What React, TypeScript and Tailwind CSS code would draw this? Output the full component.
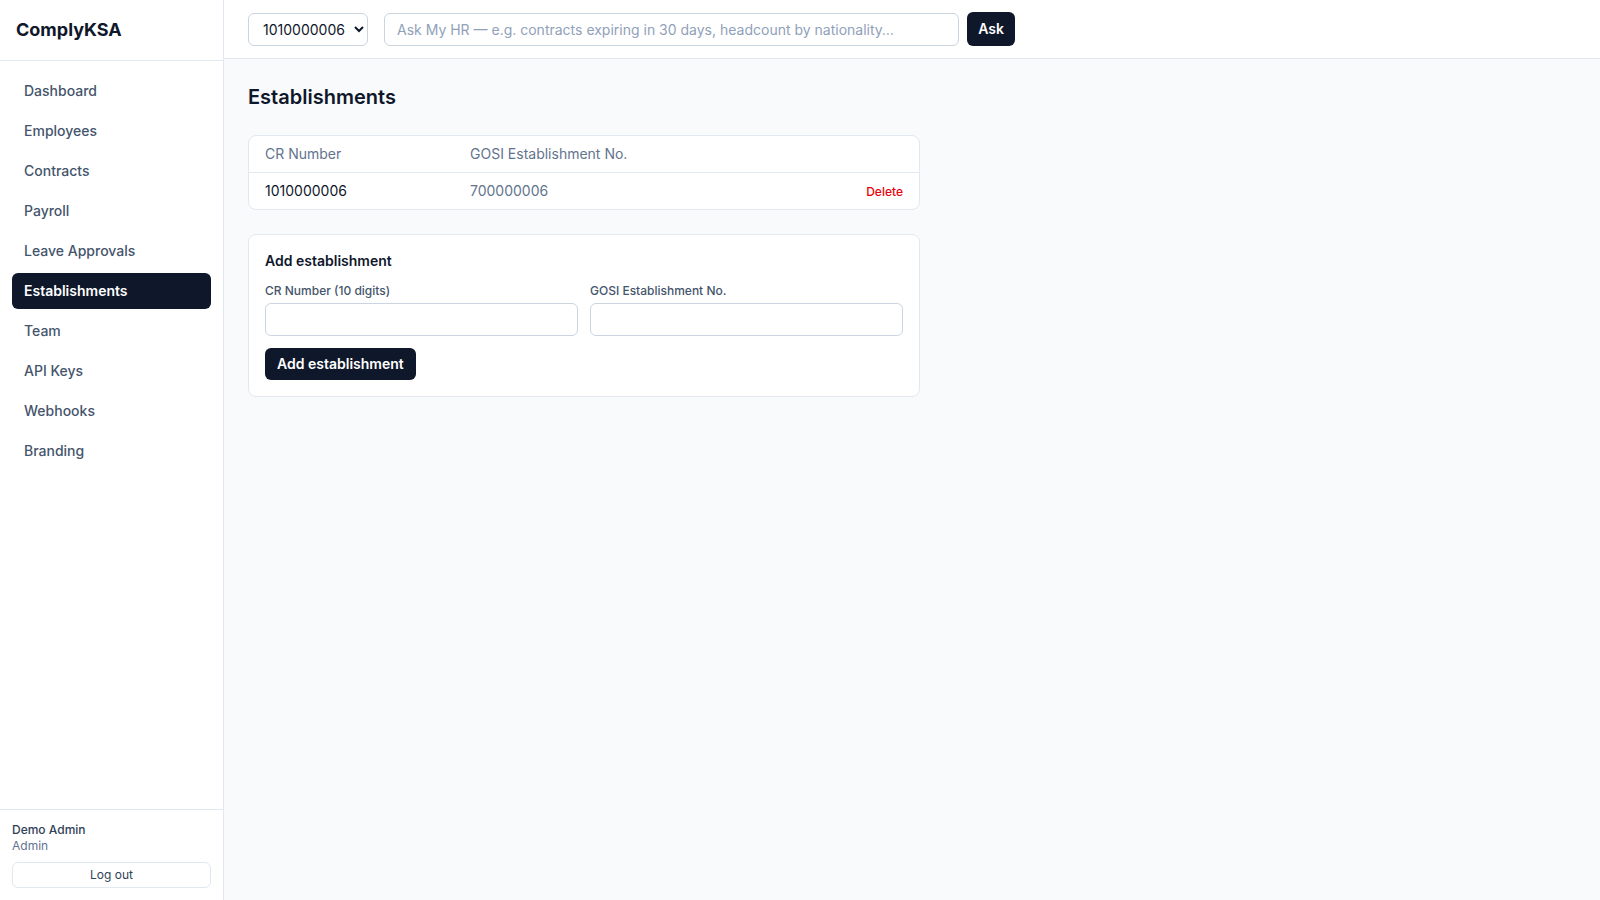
import { useState } from 'react';

const navItems = [
  'Dashboard',
  'Employees',
  'Contracts',
  'Payroll',
  'Leave Approvals',
  'Establishments',
  'Team',
  'API Keys',
  'Webhooks',
  'Branding',
];

export default function App() {
  const [cr, setCr] = useState('');
  const [gosi, setGosi] = useState('');
  const [question, setQuestion] = useState('');

  return (
    <div className="flex h-screen w-full bg-slate-50 font-['Inter',sans-serif] text-slate-900">
      {/* sidebar */}
      <aside className="flex w-56 shrink-0 flex-col border-r border-slate-200 bg-white">
        <div className="flex h-[61px] items-center border-b border-slate-200 px-4">
          <span className="text-lg font-bold text-slate-900">ComplyKSA</span>
        </div>

        <nav className="flex flex-1 flex-col gap-1 p-3">
          {navItems.map((item) => (
            <a
              key={item}
              href="#"
              className={
                item === 'Establishments'
                  ? 'rounded-md bg-slate-900 px-3 py-2 text-sm font-semibold text-white'
                  : 'rounded-md px-3 py-2 text-sm font-medium text-slate-600 hover:bg-slate-100'
              }
            >
              {item}
            </a>
          ))}
        </nav>

        <div className="border-t border-slate-200 p-3">
          <div className="text-xs font-medium text-slate-700">Demo Admin</div>
          <div className="text-xs text-slate-500">Admin</div>
          <button className="mt-2 h-[26px] w-full rounded-md border border-slate-200 text-xs text-slate-700">
            Log out
          </button>
        </div>
      </aside>

      {/* main */}
      <div className="flex min-w-0 flex-1 flex-col">
        <header className="flex h-[59px] items-center gap-4 border-b border-slate-200 bg-white px-6">
          <select className="h-[33px] w-[120px] rounded-md border border-slate-300 bg-white pl-2.5 pr-1 text-sm text-slate-900">
            <option>1010000006</option>
          </select>
          <form
            className="flex items-center gap-2"
            onSubmit={(e) => e.preventDefault()}
          >
            <input
              value={question}
              onChange={(e) => setQuestion(e.target.value)}
              placeholder="Ask My HR — e.g. contracts expiring in 30 days, headcount by nationality…"
              className="h-[33px] w-[575px] rounded-md border border-slate-300 px-3 text-sm placeholder:text-slate-400 focus:outline-none"
            />
            <button
              type="submit"
              className="h-[34px] w-12 rounded-md bg-slate-900 text-sm font-semibold text-white"
            >
              Ask
            </button>
          </form>
        </header>

        <main className="flex-1 overflow-auto p-6">
          <div className="max-w-2xl">
            <h1 className="mb-6 text-xl font-semibold text-slate-900">Establishments</h1>

            <div className="overflow-hidden rounded-lg border border-slate-200 bg-white">
              <table className="w-full text-sm">
                <thead>
                  <tr className="border-b border-slate-200 text-left text-slate-500">
                    <th className="h-9 w-[205px] px-4 font-normal">CR Number</th>
                    <th className="h-9 px-4 font-normal">GOSI Establishment No.</th>
                    <th className="h-9 px-4" />
                  </tr>
                </thead>
                <tbody>
                  <tr>
                    <td className="h-[37px] px-4 text-slate-900">1010000006</td>
                    <td className="h-[37px] px-4 text-slate-500">700000006</td>
                    <td className="h-[37px] px-4 text-right">
                      <button className="text-xs font-medium text-red-600">Delete</button>
                    </td>
                  </tr>
                </tbody>
              </table>
            </div>

            <form
              className="mt-6 rounded-lg border border-slate-200 bg-white p-4"
              onSubmit={(e) => e.preventDefault()}
            >
              <h2 className="text-sm font-semibold text-slate-900">Add establishment</h2>
              <div className="mt-3 grid grid-cols-2 gap-3">
                <label className="block">
                  <span className="block text-xs font-medium text-slate-600">CR Number (10 digits)</span>
                  <input
                    value={cr}
                    onChange={(e) => setCr(e.target.value)}
                    className="mt-1 block h-[33px] w-full rounded-md border border-slate-300 px-3 text-sm focus:outline-none"
                  />
                </label>
                <label className="block">
                  <span className="block text-xs font-medium text-slate-600">GOSI Establishment No.</span>
                  <input
                    value={gosi}
                    onChange={(e) => setGosi(e.target.value)}
                    className="mt-1 block h-[33px] w-full rounded-md border border-slate-300 px-3 text-sm focus:outline-none"
                  />
                </label>
              </div>
              <button
                type="submit"
                className="mt-3 h-8 rounded-md bg-slate-900 px-3 text-sm font-semibold text-white"
              >
                Add establishment
              </button>
            </form>
          </div>
        </main>
      </div>
    </div>
  );
}
